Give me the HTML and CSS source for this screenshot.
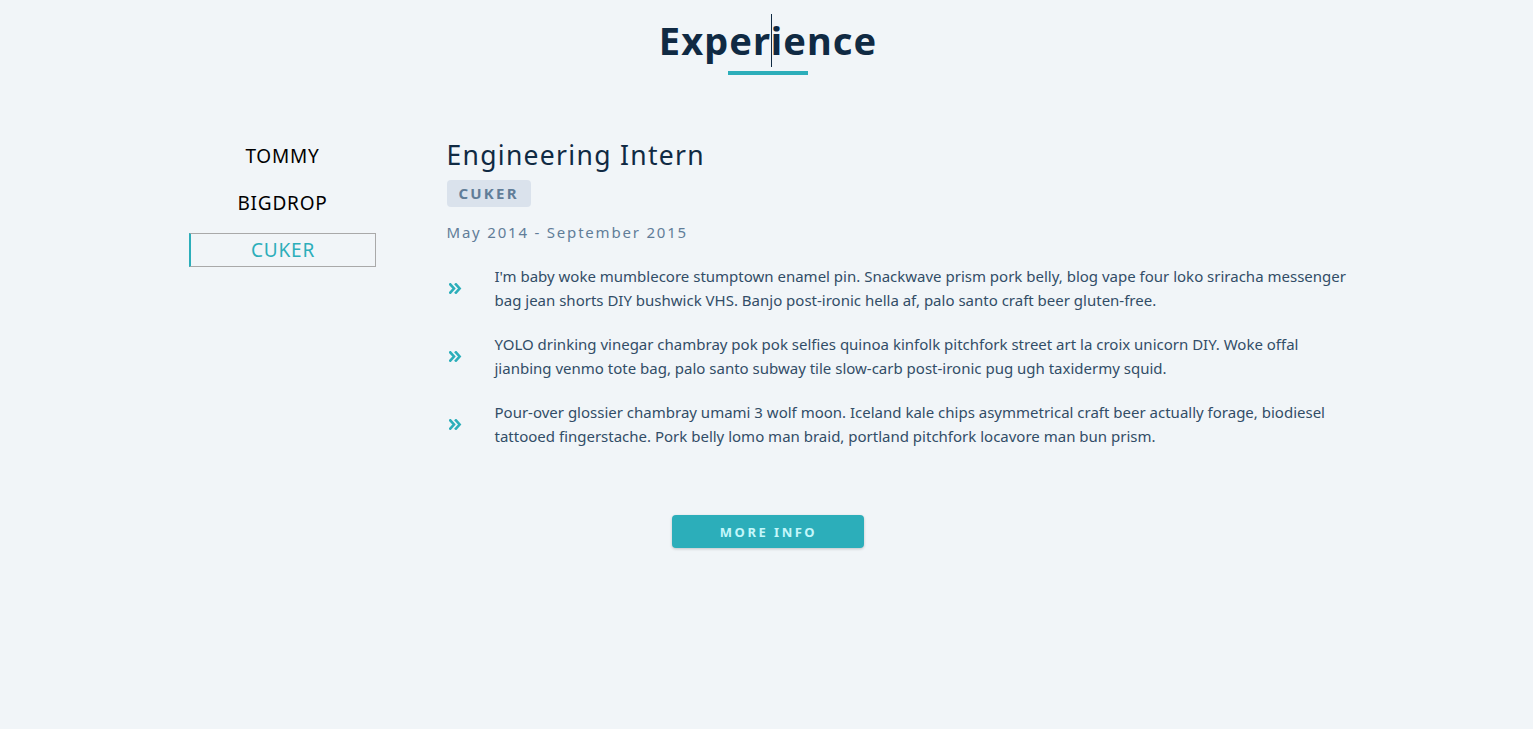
FILE: index.html
```html
<!DOCTYPE html>
<html lang="en">
<head>
<meta charset="utf-8">
<title>Experience</title>
<link rel="stylesheet" href="styles.css">
</head>
<body>
<section class="section">
  <div class="title">
    <h2>Exper<span class="caret"></span>ience</h2>
    <div class="underline"></div>
  </div>
  <div class="jobs-center">
    <div class="btn-container">
      <button class="job-btn">Tommy</button>
      <button class="job-btn">Bigdrop</button>
      <button class="job-btn active-btn">Cuker</button>
    </div>
    <article class="job-info">
      <h3>Engineering Intern</h3>
      <h4>Cuker</h4>
      <p class="job-date">May 2014 - September 2015</p>
      <div class="job-desc">
        <svg class="job-icon" viewBox="0 0 12 10" aria-hidden="true"><path d="M1.2 1.2 L4.6 5 L1.2 8.8 M6.4 1.2 L9.8 5 L6.4 8.8"/></svg>
        <p>I'm baby woke mumblecore stumptown enamel pin. Snackwave prism pork belly, blog vape four loko sriracha messenger bag jean shorts DIY bushwick VHS. Banjo post-ironic hella af, palo santo craft beer gluten-free.</p>
      </div>
      <div class="job-desc">
        <svg class="job-icon" viewBox="0 0 12 10" aria-hidden="true"><path d="M1.2 1.2 L4.6 5 L1.2 8.8 M6.4 1.2 L9.8 5 L6.4 8.8"/></svg>
        <p>YOLO drinking vinegar chambray pok pok selfies quinoa kinfolk pitchfork street art la croix unicorn DIY. Woke offal jianbing venmo tote bag, palo santo subway tile slow-carb post-ironic pug ugh taxidermy squid.</p>
      </div>
      <div class="job-desc">
        <svg class="job-icon" viewBox="0 0 12 10" aria-hidden="true"><path d="M1.2 1.2 L4.6 5 L1.2 8.8 M6.4 1.2 L9.8 5 L6.4 8.8"/></svg>
        <p>Pour-over glossier chambray umami 3 wolf moon. Iceland kale chips asymmetrical craft beer actually forage, biodiesel tattooed fingerstache. Pork belly lomo man braid, portland pitchfork locavore man bun prism.</p>
      </div>
    </article>
  </div>
  <button class="btn">More Info</button>
</section>
</body>
</html>
```
FILE: styles.css
```css
* { box-sizing: border-box; }
html, body { margin: 0; padding: 0; }
body {
  background: #f1f5f8;
  color: #102a43;
  font-family: "Noto Sans", "Open Sans", sans-serif;
  font-size: 15px;
  line-height: 24px;
}
.section { padding: 16px 0 40px 2px; }
.title { text-align: center; }
.title h2 {
  margin: 0;
  padding-left: 1px;
  font-size: 38px;
  line-height: 48px;
  font-weight: 700;
  letter-spacing: 1.1px;
  color: #102a43;
}
.caret {
  display: inline-block;
  width: 0;
  height: 53px;
  border-left: 1.5px solid #102a43;
  margin: -6px -1.5px -6px 0;
  vertical-align: -6px;
}
.underline {
  width: 80px;
  height: 4px;
  background: #2caeba;
  margin: 7px auto 0;
}
.jobs-center {
  width: 1170px;
  margin: 64px auto 0;
  display: grid;
  grid-template-columns: 200px 1fr;
  column-gap: 64px;
  align-items: start;
}
.btn-container {
  display: flex;
  flex-direction: column;
  align-items: center;
  gap: 13px;
}
.job-btn {
  width: 187px;
  height: 34px;
  padding: 0;
  background: transparent;
  border: 1px solid transparent;
  font-family: "Noto Sans", sans-serif;
  font-size: 19px;
  line-height: 32px;
  letter-spacing: 0.8px;
  text-transform: uppercase;
  color: #000;
  cursor: pointer;
}
.active-btn {
  color: #2caeba;
  border-color: #a9a9a9;
  border-left: 2px solid #2caeba;
}
.job-info h3 {
  margin: 0;
  font-size: 26.5px;
  line-height: 33px;
  font-weight: 400;
  letter-spacing: 1.3px;
  color: #102a43;
}
.job-info h4 {
  display: inline-block;
  margin: 8px 0 0;
  padding: 6px 12px;
  font-size: 15px;
  line-height: 15px;
  font-weight: 700;
  letter-spacing: 2.2px;
  text-transform: uppercase;
  color: #617d98;
  background: #dae2ec;
  border-radius: 4px;
}
.job-date {
  margin: 13px 0 20px;
  font-size: 15px;
  line-height: 24px;
  letter-spacing: 1.8px;
  color: #617d98;
}
.job-desc {
  display: grid;
  grid-template-columns: 14px 1fr;
  column-gap: 34px;
  align-items: center;
  margin-bottom: 20px;
}
.job-desc p {
  margin: 0;
  color: #324d67;
  font-size: 15px;
  line-height: 24px;
}
.job-icon {
  width: 13px;
  height: 11px;
  fill: none;
  stroke: #2caeba;
  stroke-width: 2.4;
  stroke-linecap: square;
  stroke-linejoin: miter;
  margin-left: 2px;
}
.btn {
  display: block;
  width: 192px;
  height: 33px;
  margin: 47px auto 0;
  padding: 0 0 0 2px;
  border: none;
  border-radius: 4px;
  background: #2caeba;
  color: #c4f7fa;
  font-family: "Noto Sans", sans-serif;
  font-size: 13px;
  font-weight: 700;
  letter-spacing: 2.5px;
  text-transform: uppercase;
  box-shadow: 0 1px 3px rgba(0, 0, 0, 0.2);
  cursor: pointer;
}
```
